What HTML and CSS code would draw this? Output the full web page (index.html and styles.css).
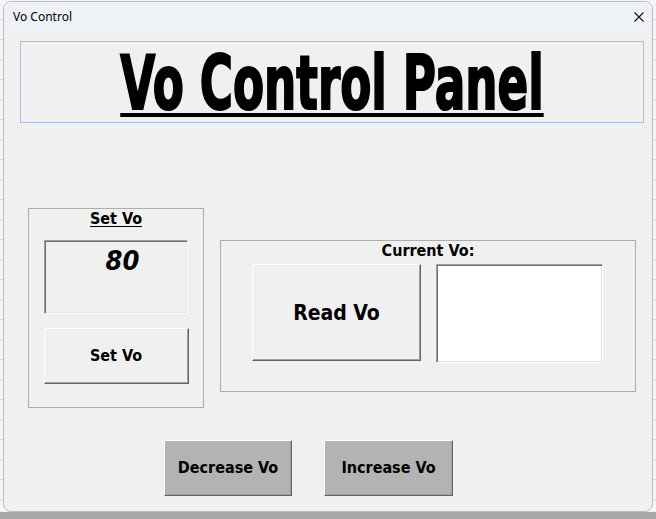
FILE: index.html
```html
<!DOCTYPE html>
<html>
<head>
<meta charset="utf-8">
<title>Vo Control</title>
<link rel="stylesheet" href="styles.css">
</head>
<body>
<div class="window">
  <div class="titlebar">
    <span class="title">Vo Control</span>
    <svg class="close" width="10" height="10" viewBox="0 0 10 10"><path d="M0.5 0.5 L9.5 9.5 M9.5 0.5 L0.5 9.5" stroke="#111" stroke-width="1.1" fill="none"/></svg>
  </div>
  <div class="client">
    <div class="banner"><span class="banner-text">Vo Control Panel</span></div>
    <div class="row">
      <div class="frame set-frame">
        <div class="frame-label underline">Set Vo</div>
        <div class="textbox value-box">80</div>
        <button class="btn set-btn">Set Vo</button>
      </div>
      <div class="frame current-frame">
        <div class="frame-label">Current Vo:</div>
        <div class="current-row">
          <button class="btn read-btn">Read Vo</button>
          <div class="textbox output-box"></div>
        </div>
      </div>
    </div>
    <div class="step-row">
      <button class="btn gray-btn">Decrease Vo</button>
      <button class="btn gray-btn inc">Increase Vo</button>
    </div>
  </div>
</div>
</body>
</html>
```

FILE: styles.css
```css
html {
  margin: 0;
  background:
    linear-gradient(to bottom, transparent 512px, #a9a9a9 512px),
    repeating-linear-gradient(to bottom, #f4f4f4 0, #f4f4f4 19px, #d6d6d6 19px, #d6d6d6 20px);
}
body {
  margin: 0;
  padding: 1px 0 0 3px;
  width: 656px;
  height: 519px;
  box-sizing: border-box;
  overflow: hidden;
}
.window {
  width: 650px;
  height: 511px;
  box-sizing: border-box;
  border: 1px solid #bdbdbd;
  border-radius: 8px;
  background: #f0f0f0;
  overflow: hidden;
  display: flex;
  flex-direction: column;
}
.titlebar {
  height: 29px;
  flex: none;
  background: #eef1f5;
  display: flex;
  align-items: center;
  justify-content: space-between;
  padding: 0 8px 0 9px;
}
.title {
  font: 12px/14px "Noto Sans", "DejaVu Sans", sans-serif;
  color: #000;
}
.close { display: block; }
.client {
  flex: 1;
  display: flex;
  flex-direction: column;
  align-items: flex-start;
}
.banner {
  margin: 10px 0 0 16px;
  width: 624px;
  height: 82px;
  box-sizing: border-box;
  border: 1px solid #a9bed9;
  padding-top: 4px;
  display: flex;
  justify-content: center;
}
.banner-text {
  flex: none;
  white-space: nowrap;
  font: bold 74px/74px "DejaVu Sans", sans-serif;
  color: #000;
  transform: scaleX(0.612);
  -webkit-text-stroke: 2.2px #000;
  text-decoration: underline;
  text-decoration-thickness: 4px;
  text-underline-offset: 4px;
}
.row {
  margin: 85px 0 0 24px;
  display: flex;
  align-items: flex-start;
}
.frame {
  box-sizing: border-box;
  border: 1px solid #adadad;
  display: flex;
  flex-direction: column;
  align-items: center;
  padding-top: 1px;
}
.frame-label {
  font: bold 16px/18px "DejaVu Sans Condensed", "DejaVu Sans", sans-serif;
  color: #000;
}
.underline { text-decoration: underline; text-underline-offset: 2px; }
.set-frame {
  width: 176px;
  height: 200px;
}
.textbox {
  box-sizing: border-box;
  border: 1px solid;
  border-color: #a0a0a0 #ffffff #ffffff #a0a0a0;
  box-shadow: inset 1px 1px #6d6d6d, inset -1px -1px #e3e3e3;
}
.value-box {
  margin-top: 12px;
  width: 144px;
  height: 74px;
  padding: 5px 0 0 13px;
  text-align: center;
  font: italic bold 27px/30px "DejaVu Sans Condensed", "DejaVu Sans", sans-serif;
  color: #000;
}
.btn {
  box-sizing: border-box;
  border: 1px solid;
  border-color: #ffffff #646464 #646464 #ffffff;
  box-shadow: inset -1px -1px #a0a0a0;
  background: #f0f0f0;
  color: #000;
  padding: 0;
  margin: 0;
  font: bold 16px/18px "DejaVu Sans Condensed", "DejaVu Sans", sans-serif;
}
.set-btn {
  margin-top: 14px;
  width: 145px;
  height: 56px;
}
.current-frame {
  margin: 32px 0 0 16px;
  width: 416px;
  height: 152px;
}
.current-row {
  align-self: stretch;
  margin-top: 4px;
  padding-left: 31px;
  display: flex;
  align-items: flex-start;
  gap: 15px;
}
.read-btn {
  width: 169px;
  height: 97px;
  font-size: 21px;
  line-height: 24px;
}
.output-box {
  width: 167px;
  height: 99px;
  background: #ffffff;
}
.step-row {
  margin: 32px 0 0 160px;
  display: flex;
  gap: 32px;
}
.gray-btn {
  width: 128px;
  height: 56px;
  background: #b3b3b3;
}
.gray-btn.inc { width: 129px; }
```
